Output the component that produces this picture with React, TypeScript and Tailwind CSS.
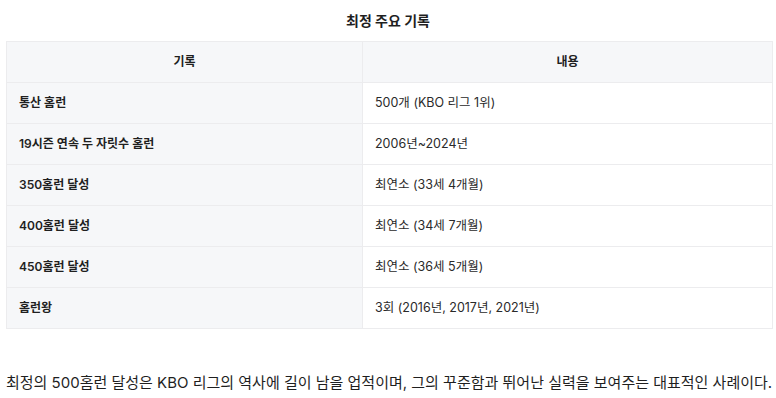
const rows = [
  ['통산 홈런', '500개 (KBO 리그 1위)'],
  ['19시즌 연속 두 자릿수 홈런', '2006년~2024년'],
  ['350홈런 달성', '최연소 (33세 4개월)'],
  ['400홈런 달성', '최연소 (34세 7개월)'],
  ['450홈런 달성', '최연소 (36세 5개월)'],
  ['홈런왕', '3회 (2016년, 2017년, 2021년)'],
]

export default function App() {
  return (
    <div
      className="bg-white text-[#1f1f1f] w-[776px] h-[398px] overflow-hidden"
      style={{ fontFamily: 'Inter, "Noto Sans CJK KR", sans-serif' }}
    >
      <div className="h-[41px] flex items-center justify-center text-[14px] font-bold">
        최정 주요 기록
      </div>
      <table className="ml-[6px] w-[767px] border-collapse text-[12px]">
        <thead>
          <tr className="h-[41px] bg-[#f6f7f9]">
            <th className="w-[356px] border border-[#ececee] font-semibold">기록</th>
            <th className="border border-[#ececee] font-semibold">내용</th>
          </tr>
        </thead>
        <tbody>
          {rows.map(([k, v]) => (
            <tr key={k} className="h-[41px]">
              <td className="border border-[#ececee] bg-[#f6f7f9] px-[12px] font-semibold">{k}</td>
              <td className="border border-[#ececee] px-[12px] text-[12.5px] text-[#2a2a2a]">{v}</td>
            </tr>
          ))}
        </tbody>
      </table>
      <p className="mt-[43px] ml-[6px] text-[15px] leading-[22px]">
        최정의 500홈런 달성은 KBO 리그의 역사에 길이 남을 업적이며, 그의 꾸준함과 뛰어난 실력을 보여주는 대표적인 사례이다.
      </p>
    </div>
  )
}
